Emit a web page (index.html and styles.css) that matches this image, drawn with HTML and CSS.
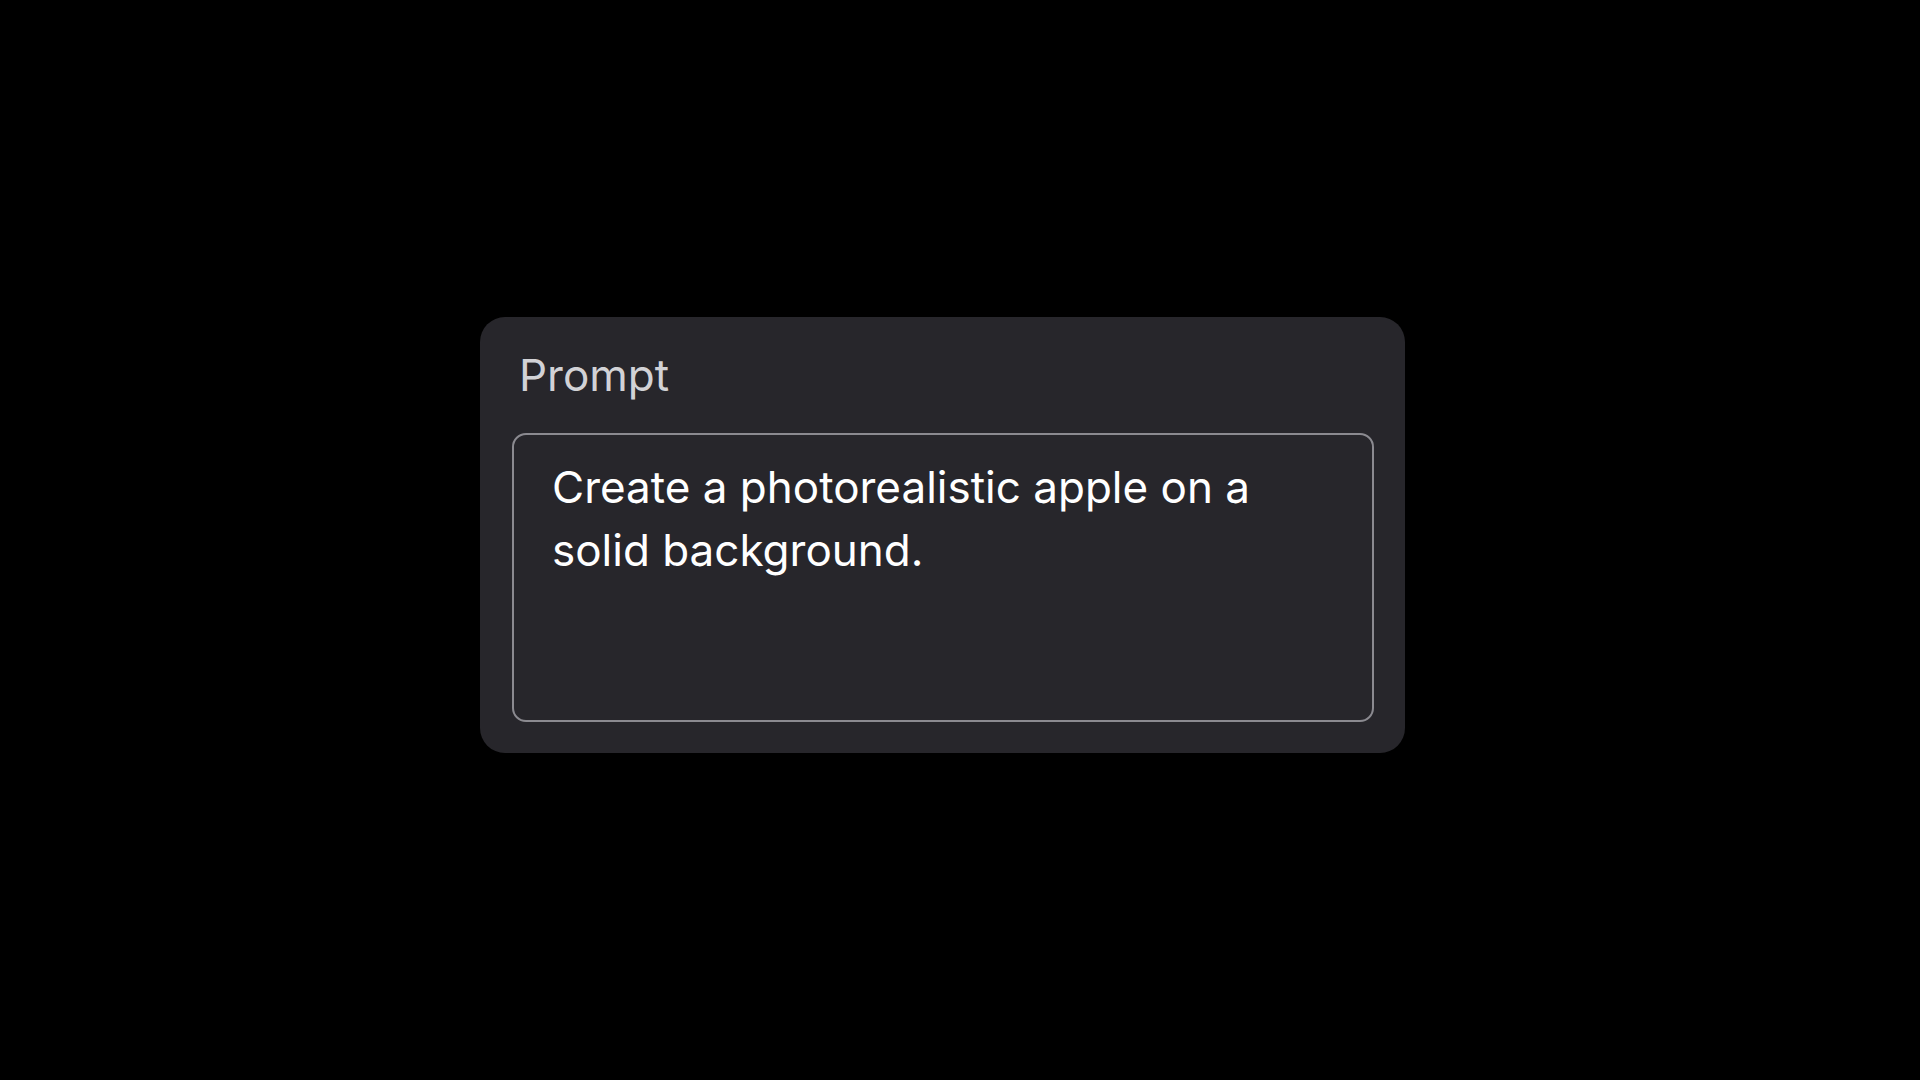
FILE: index.html
```html
<!DOCTYPE html>
<html>
<head>
    <title>Prompt</title>
    <meta name="viewport" content="width=device-width, initial-scale=1.0">
    <link rel="stylesheet" href="styles.css">
</head>
<body>
    <div class="card">
        <label class="label" for="prompt">Prompt</label>
        <div class="prompt-box" id="prompt">
            <p class="prompt-text">Create a photorealistic apple on a solid background.</p>
        </div>
    </div>
</body>
</html>
```

FILE: styles.css
```css
body{
  margin:0;
  background:#000;
  font-family:Inter, "Noto Sans", sans-serif;
  height:1080px;
  padding:317px 0 0 480px;
  box-sizing:border-box;
}
.card{
  width:925px;
  height:436px;
  box-sizing:border-box;
  background:#27262b;
  border-radius:25px;
  padding:28px 31px 31px 32px;
  display:flex;
  flex-direction:column;
}
.label{
  display:block;
  color:#d2d2d6;
  font-size:44px;
  line-height:60px;
  margin-left:7px;
  margin-bottom:28px;
}
.prompt-box{
  flex:1;
  border:2px solid #8b8a90;
  border-radius:14px;
  padding:21px 38px;
}
.prompt-text{
  margin:0;
  color:#fff;
  font-size:44px;
  line-height:63px;
}
```
